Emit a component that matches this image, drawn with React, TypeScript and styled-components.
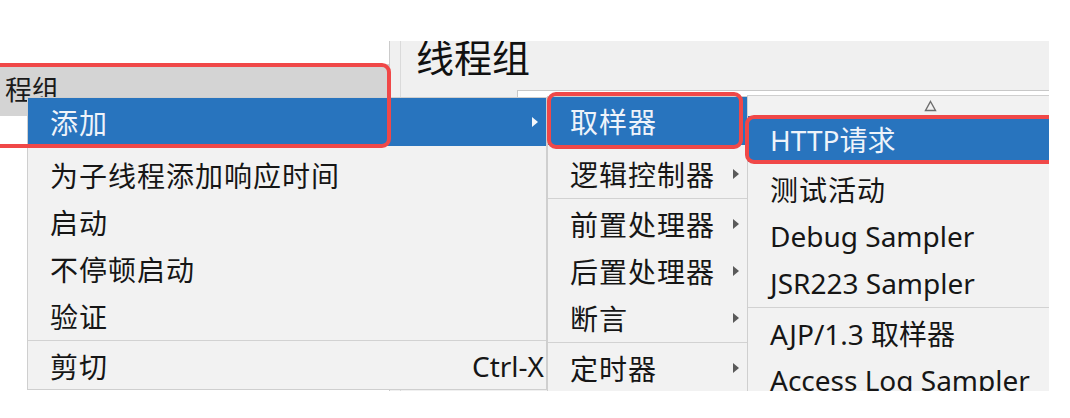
import styled, { createGlobalStyle } from 'styled-components';

const GlobalStyle = createGlobalStyle`
	html, body {
		margin: 0;
		padding: 0;
		background: #ffffff;
	}

	body {
		font-family: 'Noto Sans', 'Noto Sans CJK SC', sans-serif;
	}
`;

const Frame = styled.div`
	position: relative;
	display: flex;
	margin-top: 41px;
	width: 1049px;
	height: 350px;
	overflow: hidden;
	background: #f0f0f0;
`;

const TreePanel = styled.div`
	width: 389px;
	flex-shrink: 0;
	padding-top: 23px;
	background: #ffffff;
	border-right: 1px solid #cbcbcb;
`;

const TreeRow = styled.div`
	height: 52px;
	line-height: 52px;
	padding-left: 5px;
	background: #d4d4d4;
	color: #1a1a1a;
	font-size: 27px;
	white-space: nowrap;
`;

const Splitter = styled.div`
	width: 10px;
	flex-shrink: 0;
	background: #f0f0f0;
	border-right: 1px solid #dadada;
`;

const RightPanel = styled.div`
	flex: 1;
	display: flex;
	flex-direction: column;
	padding-left: 15px;
	background: #f0f0f0;
`;

const Title = styled.div`
	margin-top: -4px;
	height: 40px;
	line-height: 40px;
	font-size: 38px;
	color: #111111;
`;

const Field = styled.div`
	margin-top: 13px;
	margin-left: 101px;
	height: 60px;
	background: #ffffff;
	border: 1px solid #c8c8c8;
	border-right: none;
`;

const Menu = styled.div<{ $x: number; $y: number; $w: number; $z: number }>`
	position: absolute;
	left: ${(p) => p.$x}px;
	top: ${(p) => p.$y}px;
	width: ${(p) => p.$w}px;
	z-index: ${(p) => p.$z};
	display: flex;
	flex-direction: column;
	background: #f2f2f2;
	border: 1px solid #cfcfcf;
	box-sizing: border-box;
`;

const Item = styled.div<{ $active?: boolean; $h?: number; $mb?: number; $cjk?: boolean }>`
	display: flex;
	align-items: center;
	flex-shrink: 0;
	height: ${(p) => p.$h ?? 47}px;
	margin-bottom: ${(p) => p.$mb ?? 0}px;
	padding-left: 22px;
	background: ${(p) => (p.$active ? '#2874be' : 'transparent')};
	color: ${(p) => (p.$active ? '#eef3fa' : '#161616')};
	font-size: 28px;
	letter-spacing: ${(p) => (p.$cjk ? '1px' : '0')};
	white-space: nowrap;
`;

const Arrow = styled.span<{ $light?: boolean }>`
	width: 0;
	height: 0;
	margin-left: auto;
	margin-right: 8px;
	border-top: 5px solid transparent;
	border-bottom: 5px solid transparent;
	border-left: 6px solid ${(p) => (p.$light ? '#f4f7fb' : '#5a5a5a')};
`;

const Shortcut = styled.span`
	margin-left: auto;
	margin-right: 2px;
	letter-spacing: 0;
`;

const Separator = styled.div`
	flex-shrink: 0;
	height: 1px;
	margin: 1px 0;
	background: #d2d2d2;
`;

const ScrollUp = styled.div`
	display: flex;
	align-items: center;
	justify-content: center;
	height: 20px;
	flex-shrink: 0;
`;

const Outline = styled.div<{ $x: number; $y: number; $w: number; $h: number }>`
	position: absolute;
	left: ${(p) => p.$x}px;
	top: ${(p) => p.$y}px;
	width: ${(p) => p.$w}px;
	height: ${(p) => p.$h}px;
	box-sizing: border-box;
	border: 4px solid #f04848;
	border-radius: 9px;
	z-index: 10;
	pointer-events: none;
`;

export default function App() {
	return (
		<>
			<GlobalStyle />
			<Frame>
				<TreePanel>
					<TreeRow>程组</TreeRow>
				</TreePanel>
				<Splitter />
				<RightPanel>
					<Title>线程组</Title>
					<Field />
				</RightPanel>

				<Menu $x={27} $y={56} $w={520} $z={1}>
					<Item $active $cjk $h={48} $mb={5}>
						添加
						<Arrow $light />
					</Item>
					<Item $cjk>为子线程添加响应时间</Item>
					<Item $cjk>启动</Item>
					<Item $cjk>不停顿启动</Item>
					<Item $cjk>验证</Item>
					<Separator />
					<Item $cjk>
						剪切
						<Shortcut>Ctrl-X</Shortcut>
					</Item>
				</Menu>

				<Menu $x={547} $y={55} $w={201} $z={2}>
					<Item $active $cjk $h={48} $mb={5}>
						取样器
					</Item>
					<Item $cjk>
						逻辑控制器
						<Arrow />
					</Item>
					<Separator />
					<Item $cjk>
						前置处理器
						<Arrow />
					</Item>
					<Item $cjk>
						后置处理器
						<Arrow />
					</Item>
					<Item $cjk>
						断言
						<Arrow />
					</Item>
					<Separator />
					<Item $cjk>
						定时器
						<Arrow />
					</Item>
				</Menu>

				<Menu $x={747} $y={54} $w={366} $z={3}>
					<ScrollUp>
						<svg width="13" height="12" viewBox="0 0 13 12">
							<polygon points="6.5,1.5 11.5,10.5 1.5,10.5" fill="none" stroke="#6e6e6e" strokeWidth="1.4" />
						</svg>
					</ScrollUp>
					<Item $active $h={46} $mb={3}>
						HTTP请求
					</Item>
					<Item $cjk>测试活动</Item>
					<Item>Debug Sampler</Item>
					<Item>JSR223 Sampler</Item>
					<Separator />
					<Item>AJP/1.3 取样器</Item>
					<Item>Access Log Sampler</Item>
				</Menu>

				<Outline $x={-10} $y={22} $w={401} $h={85} />
				<Outline $x={547} $y={51} $w={196} $h={57} />
				<Outline $x={745} $y={74} $w={320} $h={49} />
			</Frame>
		</>
	);
}
